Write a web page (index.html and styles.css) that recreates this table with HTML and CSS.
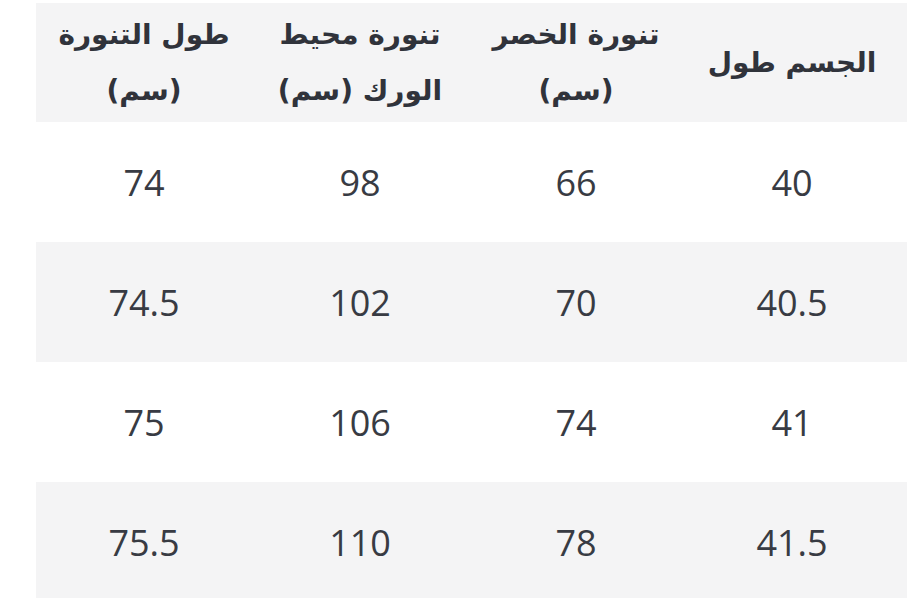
FILE: index.html
```html
<!DOCTYPE html>
<html lang="ar" dir="rtl">
<head>
<meta charset="utf-8">
<link rel="stylesheet" href="styles.css">
</head>
<body>
<div class="page">
  <div class="table">
    <div class="row head">
      <div class="cell">الجسم طول</div>
      <div class="cell">تنورة الخصر<br>(سم)</div>
      <div class="cell">تنورة محيط<br>الورك (سم)</div>
      <div class="cell">طول التنورة<br>(سم)</div>
    </div>
    <div class="row">
      <div class="cell">40</div><div class="cell">66</div><div class="cell">98</div><div class="cell">74</div>
    </div>
    <div class="row alt">
      <div class="cell">40.5</div><div class="cell">70</div><div class="cell">102</div><div class="cell">74.5</div>
    </div>
    <div class="row">
      <div class="cell">41</div><div class="cell">74</div><div class="cell">106</div><div class="cell">75</div>
    </div>
    <div class="row alt">
      <div class="cell">41.5</div><div class="cell">78</div><div class="cell">110</div><div class="cell">75.5</div>
    </div>
  </div>
</div>
</body>
</html>
```

FILE: styles.css
```css
html, body {
  margin: 0;
  padding: 0;
  background: #ffffff;
}
.page {
  padding: 3px 0 0 36px;
  width: 871px;
  overflow: hidden;
}
.table {
  display: flex;
  flex-direction: column;
}
.row {
  display: grid;
  grid-template-columns: repeat(4, 216px);
  padding-right: 7px;
  height: 120px;
  direction: rtl;
}
.row.head,
.row.alt {
  background: #f4f4f5;
}
.row.head {
  height: 119px;
}
.cell {
  display: flex;
  align-items: center;
  justify-content: center;
  text-align: center;
  font-family: "Open Sans", sans-serif;
  font-size: 36px;
  color: #383b43;
}
.head .cell {
  font-family: "DejaVu Sans", sans-serif;
  font-weight: bold;
  font-size: 28px;
  line-height: 56px;
  color: #30333b;
}
```
